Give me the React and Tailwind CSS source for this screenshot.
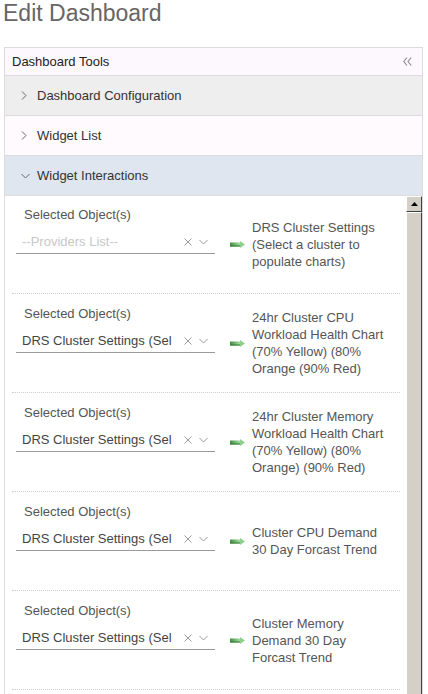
import React from "react";

const font = { fontFamily: '"Liberation Sans", Arial, sans-serif' };

const ITEMS = [
  { placeholder: true, lines: ["DRS Cluster Settings", "(Select a cluster to", "populate charts)"] },
  { lines: ["24hr Cluster CPU", "Workload Health Chart", "(70% Yellow) (80%", "Orange (90% Red)"] },
  { lines: ["24hr Cluster Memory", "Workload Health Chart", "(70% Yellow) (80%", "Orange) (90% Red)"] },
  { lines: ["Cluster CPU Demand", "30 Day Forcast Trend"] },
  { lines: ["Cluster Memory", "Demand 30 Day", "Forcast Trend"] },
];

function ChevronRight() {
  return (
    <svg width="6" height="9" viewBox="0 0 6 9" className="shrink-0">
      <polyline points="1,0.5 5,4.5 1,8.5" fill="none" stroke="#666" strokeWidth="1" />
    </svg>
  );
}

function ChevronDown({ color = "#666" }) {
  return (
    <svg width="9" height="6" viewBox="0 0 9 6" className="shrink-0">
      <polyline points="0.5,1 4.5,5 8.5,1" fill="none" stroke={color} strokeWidth="1" />
    </svg>
  );
}

function GreenArrow() {
  return (
    <svg width="15" height="7" viewBox="0 0 15 7" className="shrink-0">
      <defs>
        <linearGradient id="ga" x1="0" x2="1" y1="0" y2="0">
          <stop offset="0" stopColor="#3d8f3d" />
          <stop offset="1" stopColor="#a6dba6" />
        </linearGradient>
      </defs>
      <rect x="0" y="1.5" width="10" height="4" fill="url(#ga)" />
      <rect x="0" y="4.5" width="10" height="1" fill="#2f7a2f" />
      <polygon points="10,0 15,3.5 10,7" fill="#8fd08f" />
    </svg>
  );
}

function Row({ label, bg, open }) {
  return (
    <div className={`flex h-[40px] items-center gap-[7px] border-b border-[#dcdcdc] pl-[16px] ${bg}`}>
      <span className="flex w-[9px]">{open ? <ChevronDown /> : <ChevronRight />}</span>
      <span className="text-[13px] text-[#333]">{label}</span>
    </div>
  );
}

function Item({ item }) {
  return (
    <div className="flex h-[99px] border-b border-dotted border-[#cfcfcf]">
      <div className="w-[203px] pl-[4px] pt-[12px]">
        <div className="pl-[8px] text-[13px] leading-[16px] text-[#555]">Selected Object(s)</div>
        <div className="mt-[7px] flex h-[24px] w-[199px] items-center border-b border-[#9a9a9a] pl-[6px] pr-[7px]">
          <div
            className={`w-[158px] overflow-hidden whitespace-nowrap text-[13px] ${
              item.placeholder ? "text-[#c8c8c8]" : "text-[#444]"
            }`}
          >
            {item.placeholder ? "--Providers List--" : "DRS Cluster Settings (Sel"}
          </div>
          <svg width="8" height="8" viewBox="0 0 8 8" className="ml-[7px] shrink-0">
            <path d="M0.5 0.5 L7.5 7.5 M7.5 0.5 L0.5 7.5" stroke="#9a9a9a" strokeWidth="1" />
          </svg>
          <span className="ml-[7px]">
            <ChevronDown color="#9a9a9a" />
          </span>
        </div>
      </div>
      <div className="flex items-center">
        <span className="ml-[15px] mr-[7px]">
          <GreenArrow />
        </span>
        <div className="text-[13px] leading-[17px] text-[#555]">
          {item.lines.map((l) => (
            <div key={l} className="whitespace-nowrap">
              {l}
            </div>
          ))}
        </div>
      </div>
    </div>
  );
}

function Scrollbar() {
  return (
    <div className="w-[16px] shrink-0 bg-[#d4d0c8]">
      <div className="flex h-[16px] items-center justify-center border-b border-r border-b-[#404040] border-r-[#404040] border-t border-l border-t-white border-l-white bg-[#d4d0c8]">
        <svg width="7" height="4" viewBox="0 0 7 4">
          <polygon points="0,4 3.5,0 7,4" fill="#000" />
        </svg>
      </div>
      <div className="h-[520px] border-b border-r border-b-[#404040] border-r-[#404040] border-t border-l border-t-white border-l-white" />
    </div>
  );
}

export default function App() {
  return (
    <div className="h-[694px] overflow-hidden bg-white" style={font}>
      <h1 className="pl-[3px] text-[23px] leading-[26px] text-[#666]">Edit Dashboard</h1>
      <div className="ml-[4px] mt-[21px] w-[419px] border border-[#dcdcdc]">
        <div className="flex h-[28px] items-center justify-between border-b border-[#dcdcdc] bg-[#fdf8fd] pl-[7px] pr-[10px]">
          <span className="text-[13px] text-[#222]">Dashboard Tools</span>
          <svg width="9" height="9" viewBox="0 0 9 9">
            <polyline points="4,0.5 0.8,4.5 4,8.5" fill="none" stroke="#888" strokeWidth="1.1" />
            <polyline points="8.2,0.5 5,4.5 8.2,8.5" fill="none" stroke="#888" strokeWidth="1.1" />
          </svg>
        </div>
        <Row label="Dashboard Configuration" bg="bg-[#eeeeee]" />
        <Row label="Widget List" bg="bg-[#fefafe]" />
        <Row label="Widget Interactions" bg="bg-[#dfe6ef]" open />
        <div className="flex">
          <div className="-mt-px h-[520px] flex-1 pl-[7px] pr-[6px]">
            {ITEMS.map((it, i) => (
              <Item key={i} item={it} />
            ))}
          </div>
          <Scrollbar />
        </div>
      </div>
    </div>
  );
}
